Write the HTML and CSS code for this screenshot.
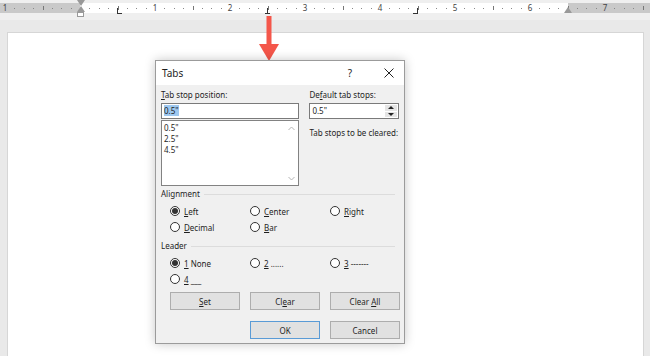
FILE: index.html
```html
<!DOCTYPE html>
<html lang="en">
<head>
    <meta charset="UTF-8">
    <title>Tabs</title>
    <link rel="stylesheet" href="styles.css">
</head>
<body>
    <div class="top">
        <div class="ruler" id="ruler">
            <div class="margin-left"></div>
            <div class="margin-right"></div>
            <div class="indent-hour"><span class="tri-down"></span><span class="tri-up"></span><span class="box"></span></div>
            <div class="indent-right"><span class="tri-up"></span></div>
            <span class="tab-left" style="left: 117px"></span>
            <span class="tab-center" style="left: 267px"></span>
            <span class="tab-right" style="left: 417px"></span>
        </div>
    </div>
    <div class="page"></div>

    <svg class="arrow" width="20" height="46" viewBox="0 0 20 46">
        <rect x="7.5" y="0" width="5" height="34" fill="#f4564a"/>
        <polygon points="0,28 20,28 10,45" fill="#f4564a"/>
    </svg>

    <div class="dialog">
        <div class="titlebar">
            <span class="title">Tabs</span>
            <span class="help">?</span>
            <svg class="close" width="10" height="10" viewBox="0 0 10 10">
                <path d="M0.5 0.5 L9.5 9.5 M9.5 0.5 L0.5 9.5" stroke="#222" stroke-width="1" fill="none"/>
            </svg>
        </div>
        <div class="dlg-body">
            <div class="toprow">
                <div class="col-left">
                    <div class="label"><u>T</u>ab stop position:</div>
                    <div class="textbox"><span class="sel">0.5"</span></div>
                    <div class="listbox">
                        <div class="items">
                            <div>0.5"</div>
                            <div>2.5"</div>
                            <div>4.5"</div>
                        </div>
                        <div class="scroll">
                            <svg width="7" height="5" viewBox="0 0 7 5"><path d="M0.5 4 L3.5 1 L6.5 4" stroke="#b5b5b5" fill="none"/></svg>
                            <svg width="7" height="5" viewBox="0 0 7 5"><path d="M0.5 1 L3.5 4 L6.5 1" stroke="#b5b5b5" fill="none"/></svg>
                        </div>
                    </div>
                </div>
                <div class="col-right">
                    <div class="label">De<u>f</u>ault tab stops:</div>
                    <div class="spinner">
                        <span class="val">0.5"</span>
                        <div class="spin">
                            <span class="up"></span>
                            <span class="down"></span>
                        </div>
                    </div>
                    <div class="label cleared">Tab stops to be cleared:</div>
                </div>
            </div>

            <div class="group">Alignment</div>
            <div class="options">
                <label class="radio"><span class="dot on"></span><u>L</u>eft</label>
                <label class="radio"><span class="dot"></span><u>C</u>enter</label>
                <label class="radio"><span class="dot"></span><u>R</u>ight</label>
                <label class="radio"><span class="dot"></span><u>D</u>ecimal</label>
                <label class="radio"><span class="dot"></span><u>B</u>ar</label>
            </div>

            <div class="group leader">Leader</div>
            <div class="options">
                <label class="radio"><span class="dot on"></span><u>1</u>&nbsp;None</label>
                <label class="radio"><span class="dot"></span><u>2</u>&nbsp;......</label>
                <label class="radio"><span class="dot"></span><u>3</u>&nbsp;-------</label>
                <label class="radio"><span class="dot"></span><u>4</u>&nbsp;___</label>
            </div>

            <div class="buttons">
                <button class="btn"><u>S</u>et</button>
                <button class="btn">Cl<u>e</u>ar</button>
                <button class="btn">Clear <u>A</u>ll</button>
            </div>
            <div class="buttons last">
                <span></span>
                <button class="btn default">OK</button>
                <button class="btn">Cancel</button>
            </div>
        </div>
    </div>

    <script>
        // ruler: 75px per inch, zero at the left margin
        var ruler = document.getElementById('ruler');
        var zero = 80;
        for (var k = -8; k <= 60; k ++) {
            if (k == 0) continue;
            var x = zero + k * 75 / 8;
            var el = document.createElement('span');
            if (k % 8 == 0) {
                el.className = 'num';
                el.innerHTML = Math.abs(k / 8);
            } else if (k % 4 == 0) {
                el.className = 'line';
            } else {
                el.className = 'dot-mark';
            }
            el.style.left = x + 'px';
            ruler.append(el);
        }
    </script>
</body>
</html>
```

FILE: styles.css
```css
html {
    height: 100%;
}
body {
    margin: 0;
    padding: 0;
    height: 100%;
    overflow: hidden;
    background-color: #e9e9e9;
    font-family: "Noto Sans", "Open Sans", sans-serif;
    font-size: 8px;
    color: #1e1e1e;
    position: relative;
    display: flex;
    flex-direction: column;
}
.top {
    height: 20px;
    background-color: #efefef;
    padding-top: 3px;
    box-sizing: border-box;
}
.ruler {
    position: relative;
    height: 10px;
    background-color: #fff;
    overflow: hidden;
}
.margin-left, .margin-right {
    position: absolute;
    top: 0;
    height: 10px;
    background-color: #c9c9c9;
}
.margin-left {
    left: 0;
    width: 80px;
}
.margin-right {
    left: 568px;
    right: 0;
}
.ruler .num {
    position: absolute;
    top: -1px;
    width: 8px;
    margin-left: -4px;
    text-align: center;
    font-size: 8px;
    line-height: 11px;
    color: #444;
}
.ruler .line {
    position: absolute;
    top: 3px;
    width: 1px;
    height: 4px;
    background-color: #777;
}
.ruler .dot-mark {
    position: absolute;
    top: 5px;
    width: 1px;
    height: 1px;
    background-color: #888;
}
.top .ruler {
    overflow: visible;
}
.indent-hour {
    position: absolute;
    left: 76px;
    top: -3px;
    width: 9px;
    display: flex;
    flex-direction: column;
    align-items: center;
    z-index: 2;
}
.indent-hour .tri-down {
    width: 0;
    height: 0;
    border-left: 4px solid transparent;
    border-right: 4px solid transparent;
    border-top: 6px solid #999;
}
.indent-hour .tri-up {
    width: 0;
    height: 0;
    border-left: 4px solid transparent;
    border-right: 4px solid transparent;
    border-bottom: 6px solid #999;
}
.indent-hour .box {
    width: 7px;
    height: 5px;
    border: 1px solid #999;
    background-color: #fff;
    box-sizing: border-box;
}
.indent-right {
    position: absolute;
    left: 564px;
    top: 4px;
    z-index: 2;
}
.indent-right .tri-up {
    display: block;
    width: 0;
    height: 0;
    border-left: 4px solid transparent;
    border-right: 4px solid transparent;
    border-bottom: 6px solid #999;
}
.tab-left, .tab-center, .tab-right {
    position: absolute;
    top: 5px;
    width: 5px;
    height: 6px;
    box-sizing: border-box;
}
.tab-left {
    border-left: 1px solid #333;
    border-bottom: 1px solid #333;
}
.tab-right {
    margin-left: -4px;
    border-right: 1px solid #333;
    border-bottom: 1px solid #333;
}
.tab-center {
    margin-left: -2px;
    border-bottom: 1px solid #333;
}
.tab-center::before {
    content: "";
    position: absolute;
    left: 2px;
    top: 0;
    width: 1px;
    height: 5px;
    background-color: #333;
}
.page {
    flex: 1;
    margin: 12px 6px 0 7px;
    background-color: #fff;
    border: 1px solid #d6d6d6;
    border-bottom: none;
}
.arrow {
    position: absolute;
    left: 259px;
    top: 16px;
}

/* dialog */
.dialog {
    position: absolute;
    left: 155px;
    top: 60px;
    width: 250px;
    height: 284px;
    box-sizing: border-box;
    border: 1px solid #9b9b9b;
    background-color: #f0f0f0;
    box-shadow: 0 0 10px rgba(0, 0, 0, 0.22);
}
.titlebar {
    height: 24px;
    background-color: #fff;
    display: flex;
    align-items: center;
    padding-left: 6px;
    padding-right: 10px;
}
.title {
    font-size: 10px;
    flex: 1;
}
.help {
    font-size: 10px;
    margin-right: 32px;
}
.dlg-body {
    padding: 4px 5px 0 5px;
}
.toprow {
    display: flex;
    gap: 10px;
}
.col-left {
    width: 139px;
}
.col-right {
    width: 90px;
}
.label {
    line-height: 12px;
    margin-bottom: 2px;
}
.label.cleared {
    margin-top: 8px;
}
.textbox {
    height: 16px;
    border: 1px solid #7a7a7a;
    background-color: #fff;
    box-sizing: border-box;
    padding: 1px 2px;
    line-height: 12px;
}
.sel {
    background-color: #9dc8f0;
}
.listbox {
    margin-top: 1px;
    height: 66px;
    border: 1px solid #828282;
    background-color: #fff;
    box-sizing: border-box;
    display: flex;
}
.items {
    flex: 1;
    padding: 1px 2px;
    line-height: 11px;
}
.scroll {
    width: 13px;
    display: flex;
    flex-direction: column;
    justify-content: space-between;
    align-items: center;
    padding: 5px 0 4px;
}
.spinner {
    height: 16px;
    border: 1px solid #7a7a7a;
    background-color: #fff;
    box-sizing: border-box;
    display: flex;
    line-height: 14px;
}
.spinner .val {
    flex: 1;
    padding-left: 2px;
}
.spin {
    width: 12px;
    display: flex;
    flex-direction: column;
    gap: 1px;
    padding: 1px;
}
.spin span {
    flex: 1;
    background-color: #e5e5e5;
    display: flex;
    justify-content: center;
    align-items: center;
}
.spin .up::before {
    content: "";
    border-left: 3px solid transparent;
    border-right: 3px solid transparent;
    border-bottom: 3px solid #222;
}
.spin .down::before {
    content: "";
    border-left: 3px solid transparent;
    border-right: 3px solid transparent;
    border-top: 3px solid #222;
}
.group {
    margin-top: 2px;
    line-height: 12px;
    display: flex;
    align-items: center;
    gap: 4px;
}
.group::after {
    content: "";
    flex: 1;
    height: 1px;
    background-color: #dcdcdc;
    margin-right: 4px;
}
.group.leader {
    margin-top: 5px;
}
.options {
    display: grid;
    grid-template-columns: 80px 80px 70px;
    grid-auto-rows: 16px;
    padding-left: 9px;
    margin-top: 3px;
}
.radio {
    display: flex;
    align-items: center;
}
.dot {
    width: 10px;
    height: 10px;
    border: 1px solid #333;
    border-radius: 50%;
    background-color: #fff;
    box-sizing: border-box;
    margin-right: 4px;
    display: flex;
    align-items: center;
    justify-content: center;
}
.dot.on::before {
    content: "";
    width: 6px;
    height: 6px;
    border-radius: 50%;
    background-color: #333;
}
.buttons {
    display: grid;
    grid-template-columns: 70px 70px 70px;
    column-gap: 10px;
    padding-left: 9px;
    margin-top: 5px;
}
.buttons.last {
    margin-top: 11px;
}
.btn {
    height: 18px;
    font-family: inherit;
    font-size: 8px;
    color: #1e1e1e;
    background-color: #e1e1e1;
    border: 1px solid #adadad;
    padding: 0;
}
.btn.default {
    border-color: #5a9bd6;
}
```
